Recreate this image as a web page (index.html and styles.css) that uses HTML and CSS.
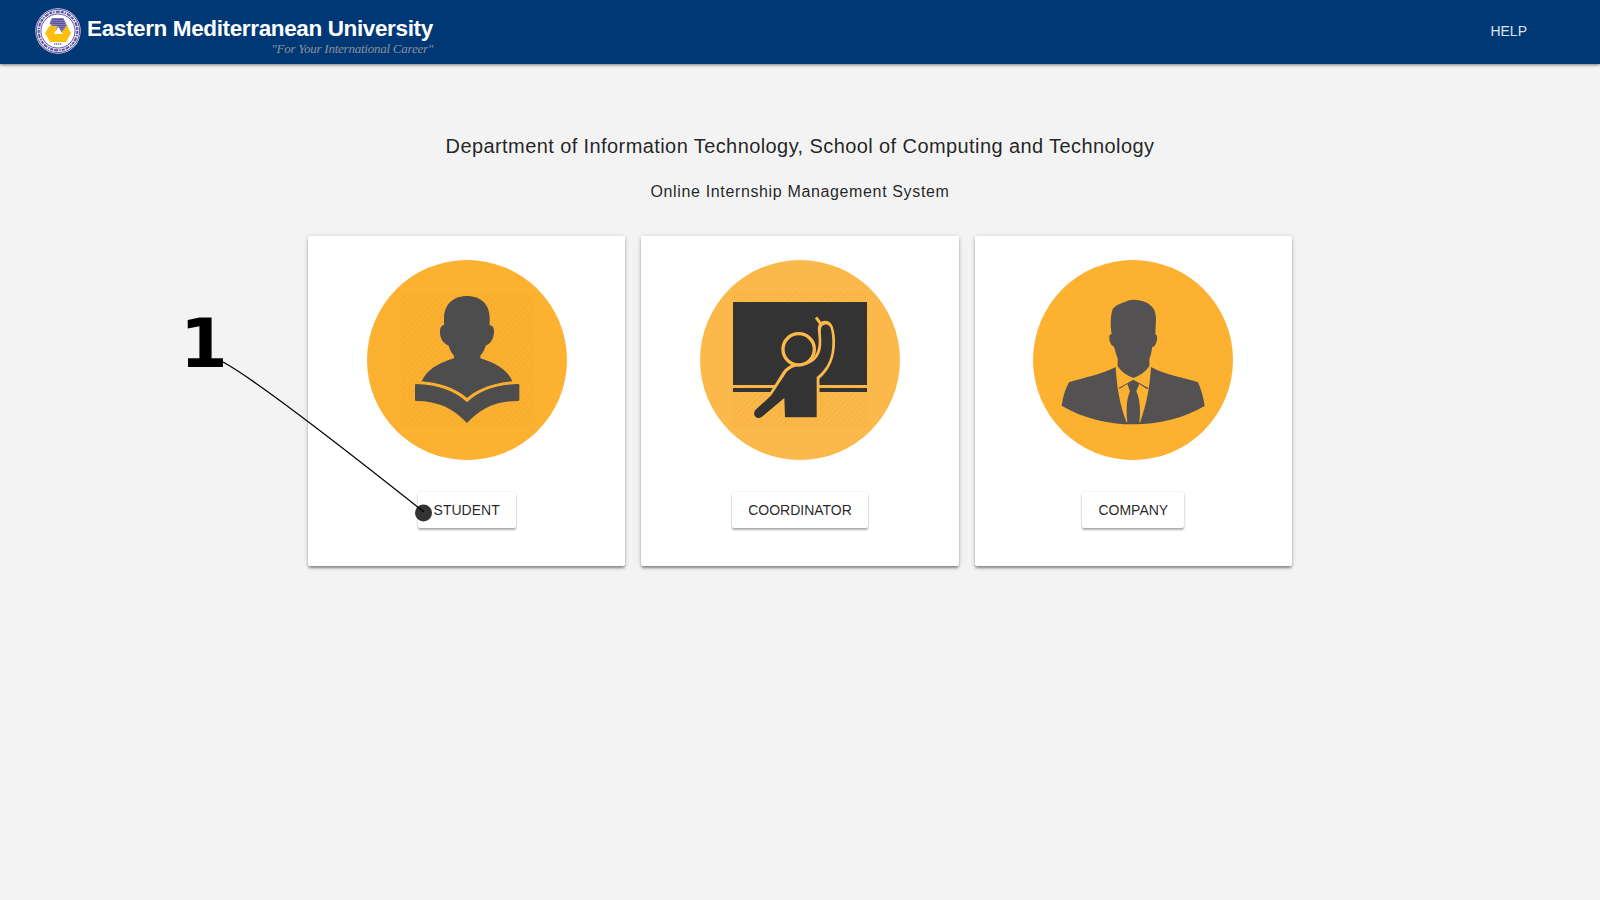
FILE: index.html
```html
<!DOCTYPE html>
<html lang="en">
<head>
<meta charset="utf-8">
<title>Online Internship Management System</title>
<link rel="stylesheet" href="styles.css">
</head>
<body>
<header class="toolbar">
  <div class="brand">
    <svg class="seal" viewBox="0 0 138 138" aria-hidden="true">
      <circle cx="69" cy="69" r="68" fill="#e9e8f5"/>
      <circle cx="69" cy="69" r="65" fill="none" stroke="#5c529f" stroke-width="3"/>
      <circle cx="69" cy="69" r="58" fill="none" stroke="#5a509f" stroke-width="6" stroke-dasharray="9 3 4 4 12 3"/>
      <circle cx="69" cy="69" r="51" fill="none" stroke="#5c529f" stroke-width="3"/>
      <circle cx="69" cy="69" r="49" fill="#fff"/>
      <path d="M51 31H85L95 52L84 75H66L44 45Z" fill="#4f489b"/>
      <path d="M46 37H92M44 43H96M42 49H98M42 55H98M60 61H96M60 67H96" stroke="#c9c7e4" stroke-width="1.500"/>
      <path d="M44 53H63L68 55L58 77H83L80 72L94 53H97L108 76L93 102H45L30 76Z" fill="#fdbf0f"/>
      <path d="M70 56L83 77H57Z" fill="#fff"/>
      <path d="M57 108H81" stroke="#6b7799" stroke-width="5" stroke-dasharray="4 2"/>
    </svg>
    <div class="brand-text">
      <span class="brand-name">Eastern Mediterranean University</span>
      <span class="brand-motto">"For Your International Career"</span>
    </div>
  </div>
  <a class="help">HELP</a>
</header>

<main class="content">
  <h1 class="title">Department of Information Technology, School of Computing and Technology</h1>
  <h2 class="subtitle">Online Internship Management System</h2>
  <div class="cards">
    <section class="card">
      <svg class="avatar" viewBox="21 30 600 600" aria-hidden="true">
        <defs>
          <pattern id="hatch" width="12" height="12" patternUnits="userSpaceOnUse" patternTransform="rotate(45)">
            <rect width="5" height="12" fill="#e59c20" opacity=".22"/>
          </pattern>
        </defs>
        <circle cx="321" cy="330" r="300" fill="#fcb131"/>
        <rect x="122" y="130" width="400" height="400" fill="url(#hatch)"/>
        <g fill="#4d4d4d">
          <path d="M321 138C364 138 389 164 389 204V225C399 227 403 234 402 247C401 268 391 282 377 287C374 300 367 309 361 317V325C411 340 444 362 457 394C404 399 357 413 321 444C285 413 238 399 185 394C200 362 231 340 282 325V317C276 309 269 300 266 287C251 281 240 267 240 247C240 234 243 227 252 225V204C253 164 278 138 321 138Z"/>
          <path d="M168 402C234 405 283 420 321 457C359 420 408 405 474 402Q478 402 478 406V449Q478 453 474 453C405 453 362 476 321 519C280 476 236 453 168 453Q165 453 165 449V406Q165 402 168 402Z"/>
        </g>
      </svg>
      <button class="btn">STUDENT</button>
    </section>
    <section class="card">
      <svg class="avatar" viewBox="30 30 600 600" aria-hidden="true">
        <circle cx="330" cy="330" r="300" fill="#fcb94b"/>
        <rect x="125" y="124" width="410" height="410" fill="url(#hatch)"/>
        <path d="M129 156H531V405H129ZM129 414H531V426H129Z" fill="#333"/>
        <path d="M285 502L283 444L215 501C200 512 185 493 196 480L242 433L278 374C293 348 310 347 326 345C363 344 379 329 387 300C395 274 388 253 388 237C387 223 395 217 405 217C424 217 427 237 430 260C435 324 413 360 384 384V502Z" fill="#fcb94b" stroke="#fcb94b" stroke-width="9" stroke-linejoin="round"/>
        <path d="M285 502L283 444L215 501C200 512 185 493 196 480L244 436L284 375C298 352 318 349 342 346C374 340 388 318 392 298C397 269 391 252 393 237C394 220 418 218 422 235C428 257 428 283 425 305C419 341 402 363 380 381V502Z" fill="#333"/>
        <circle cx="326" cy="298" r="47" fill="#333" stroke="#fcb94b" stroke-width="10"/>
        <path d="M378 202L391 220" stroke="#fcb94b" stroke-width="9"/>
      </svg>
      <button class="btn">COORDINATOR</button>
    </section>
    <section class="card">
      <svg class="avatar" viewBox="24 30 600 600" aria-hidden="true">
        <circle cx="324" cy="330" r="300" fill="#fcb131"/>
        <g fill="#545152">
          <path d="M326 149C367 151 394 169 393 207L391 253C400 254 397 279 388 289L382 291C379 306 377 320 373 326V349C361 366 344 378 325 384C304 377 289 365 278 349V324C273 315 271 302 267 290C258 287 252 273 253 258Q254 252 260 252C255 222 257 196 263 178C273 162 297 158 313 151Q319 149 326 149Z"/>
          <path d="M272 351C276 419 286 469 304 515L307 517C303 480 304 450 315 424L307 402L283 417L281 414L325 389L370 414L367 418L343 402L334 424C346 450 347 484 343 518L346 515C363 467 374 417 378 351C425 377 476 382 519 397C528 418 536 443 539 468C413 542 234 541 110 467C114 438 122 415 132 397C179 382 226 374 272 351Z"/>
        </g>
      </svg>
      <button class="btn">COMPANY</button>
    </section>
  </div>
</main>

<svg class="callout" viewBox="0 0 260 230" aria-hidden="true">
  <text class="callout-number" x="0" y="67">1</text>
  <circle cx="243.500" cy="213" r="8.500" fill="#333"/>
  <path d="M43 62C69 76 132 123 244 212" fill="none" stroke="#000" stroke-width="1.300"/>
</svg>
</body>
</html>
```

FILE: styles.css
```css
* { box-sizing: border-box; }

body {
  margin: 0;
  min-height: 900px;
  background: #f3f3f3;
  color: rgba(0, 0, 0, .87);
  font-family: "Liberation Sans", Arial, sans-serif;
}

.toolbar {
  display: flex;
  justify-content: space-between;
  height: 64px;
  padding: 0 73px 0 35px;
  background: #003876;
  box-shadow: 0 1px 3px rgba(0, 0, 0, .5);
}

.brand { display: flex; gap: 6px; padding-top: 8px; }
.seal { width: 46px; height: 46px; }
.brand-text { display: flex; flex-direction: column; width: 346px; }

.brand-name {
  color: #fff;
  font-size: 22.500px;
  font-weight: bold;
  line-height: 26px;
  padding-top: 8px;
  letter-spacing: -.37px;
  white-space: nowrap;
}

.brand-motto {
  align-self: flex-end;
  color: #8b929c;
  font: italic 13px/13px "Liberation Serif", serif;
  letter-spacing: -.24px;
  white-space: nowrap;
}

.help { color: #dbe3ec; font-size: 14px; line-height: 62px; }

.content { padding-top: 66px; text-align: center; }

.title {
  margin: 0;
  font-size: 20px;
  font-weight: 400;
  line-height: 32px;
  letter-spacing: .41px;
}

.subtitle {
  margin: 18px 0 0;
  font-size: 16px;
  font-weight: 400;
  line-height: 24px;
  letter-spacing: .64px;
}

.cards {
  display: grid;
  grid-template-columns: repeat(3, 1fr);
  gap: 16px;
  width: 984px;
  margin: 32px auto 0;
}

.card {
  display: flex;
  flex-direction: column;
  align-items: center;
  height: 330px;
  padding-top: 24px;
  background: #fff;
  border-radius: 2px;
  box-shadow: 0 1px 5px rgba(0, 0, 0, .2), 0 2px 2px rgba(0, 0, 0, .14), 0 3px 3px -1px rgba(0, 0, 0, .25);
}

.avatar { width: 200px; height: 200px; }

.btn {
  height: 36px;
  margin-top: 32px;
  padding: 0 16px;
  border: 0;
  border-radius: 2px;
  background: #fff;
  color: rgba(0, 0, 0, .87);
  font: 14px/36px "Liberation Sans", Arial, sans-serif;
  box-shadow: 0 0 2px rgba(0, 0, 0, .16), 0 2px 2px rgba(0, 0, 0, .3);
}

.callout {
  position: absolute;
  left: 180px;
  top: 300px;
  width: 260px;
  height: 230px;
  pointer-events: none;
}

.callout-number { font: bold 68.500px "DejaVu Sans", sans-serif; }
```
